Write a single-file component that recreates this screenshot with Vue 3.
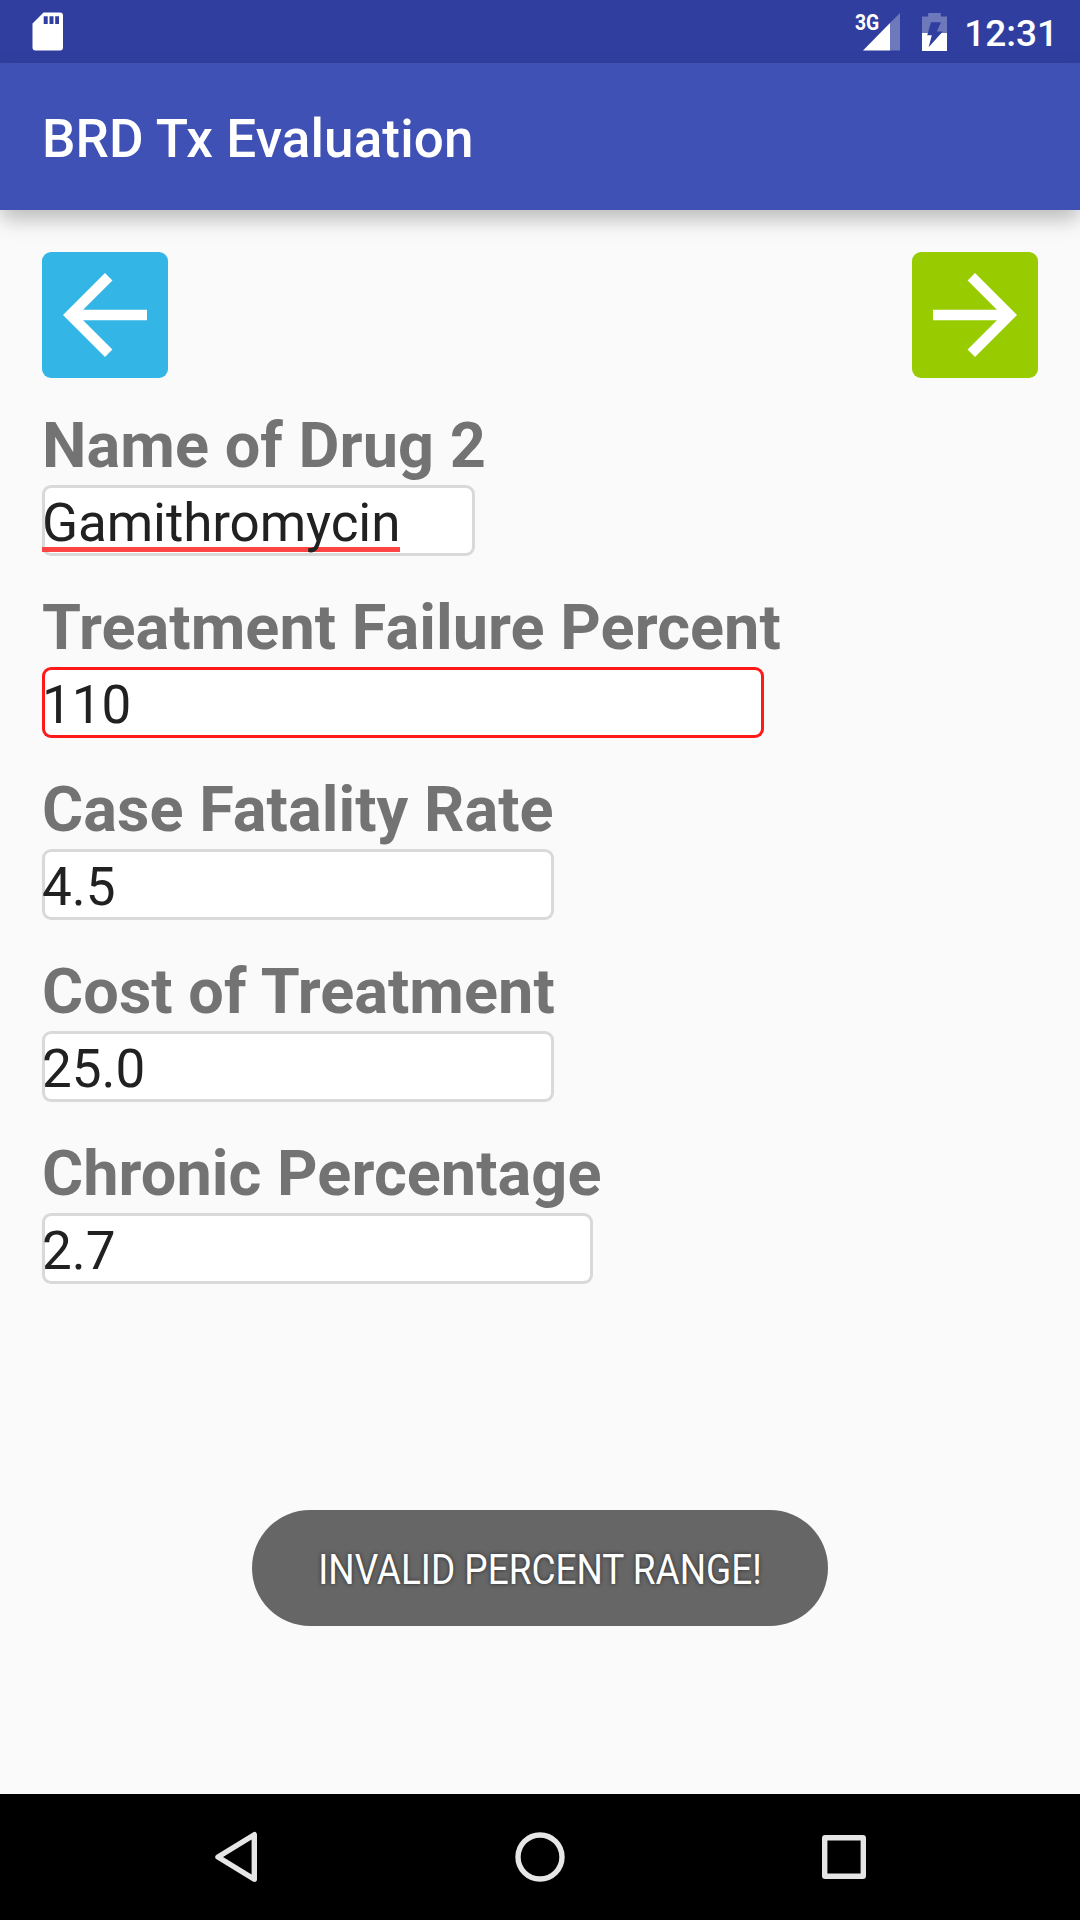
<script setup>
const fields = [
  { label: 'Name of Drug 2', value: 'Gamithromycin', width: 433, misspelled: true },
  { label: 'Treatment Failure Percent', value: '110', width: 722, invalid: true },
  { label: 'Case Fatality Rate', value: '4.5', width: 512 },
  { label: 'Cost of Treatment', value: '25.0', width: 512 },
  { label: 'Chronic Percentage', value: '2.7', width: 551 },
]
const battery = 'M6.200 0H18.800V3.500H25V38H0V3.500H6.200Z M9 9.300 5.200 22.300H9.800L6.600 34.300 20.700 18.600H14.800L19 9.300Z'
</script>

<template>
  <div class="screen">
    <header class="status">
      <svg class="sd" width="32" height="39" viewBox="0 0 32 39">
        <path fill="#fff" fill-rule="evenodd" d="M11.500 .500H28a3 3 0 0 1 3 3V35.500a3 3 0 0 1-3 3H3.500a3 3 0 0 1-3-3V11.500ZM11.700 4.200v7.800h4V4.200ZM17.500 4.200v7.800h4V4.200ZM23.200 4.200v7.800h3.800V4.200Z" />
      </svg>
      <div class="indicators">
        <div class="network">
          <span class="gen">3G</span>
          <svg width="37" height="38" viewBox="0 0 37 38">
            <path fill="#fff" fill-opacity=".3" d="M37 0V37.500H27V10Z" />
            <path fill="#fff" d="M0 37.500 27 10V37.500Z" />
          </svg>
        </div>
        <svg class="battery" width="25" height="38" viewBox="0 0 25 38">
          <clipPath id="empty"><rect width="25" height="20" /></clipPath>
          <clipPath id="charged"><rect y="20" width="25" height="18" /></clipPath>
          <path :d="battery" fill="#fff" fill-opacity=".3" fill-rule="evenodd" clip-path="url(#empty)" />
          <path :d="battery" fill="#fff" fill-rule="evenodd" clip-path="url(#charged)" />
        </svg>
        <span class="clock">12:31</span>
      </div>
    </header>
    <div class="appbar"><h1>BRD Tx Evaluation</h1></div>
    <main>
      <div class="actions">
        <button class="back" aria-label="Back">
          <svg viewBox="0 0 24 24"><path fill="#fff" d="M20 11H7.830l5.590-5.590L12 4l-8 8 8 8 1.410-1.410L7.830 13H20z" /></svg>
        </button>
        <button class="next" aria-label="Next">
          <svg viewBox="0 0 24 24"><path fill="#fff" d="M12 4l-1.410 1.410L16.170 11H4v2h12.170l-5.580 5.590L12 20l8-8z" /></svg>
        </button>
      </div>
      <div v-for="f in fields" :key="f.label" class="field">
        <label>{{ f.label }}</label>
        <div class="input" :class="{ invalid: f.invalid }" :style="{ width: f.width + 'px' }">
          <span :class="{ misspelled: f.misspelled }">{{ f.value }}</span>
        </div>
      </div>
      <div class="toast"><span>INVALID PERCENT RANGE!</span></div>
    </main>
    <nav>
      <svg width="50" height="54" viewBox="0 0 50 54"><path d="M42.300 4.700V49.300L6 27Z" /></svg>
      <svg width="54" height="54" viewBox="0 0 54 54"><circle cx="27" cy="27" r="22" /></svg>
      <svg width="54" height="54" viewBox="0 0 54 54"><rect x="7.700" y="7.700" width="38.600" height="38.600" rx=".5" /></svg>
    </nav>
  </div>
</template>

<style>
body { margin: 0; background: #fafafa; }
</style>

<style scoped>
.screen {
  width: 1080px;
  height: 1920px;
  display: flex;
  flex-direction: column;
  overflow: hidden;
  background: #fafafa;
  font-family: Roboto, sans-serif;
}
.status {
  height: 63px;
  flex: none;
  box-sizing: border-box;
  padding: 0 22px 0 32px;
  display: flex;
  justify-content: space-between;
  align-items: center;
  background: #303f9f;
  color: #fff;
}
.indicators { display: flex; align-items: center; }
.network { position: relative; display: flex; margin-right: 22px; }
.gen {
  position: absolute;
  left: -8px;
  top: -2px;
  font-size: 21.5px;
  line-height: 24px;
  font-weight: 700;
  transform: scaleX(.9);
  transform-origin: left;
}
.battery { margin-right: 17px; }
.clock { font-size: 37px; line-height: 43px; font-weight: 500; padding-top: 3px; }
.appbar {
  height: 147px;
  flex: none;
  display: flex;
  align-items: center;
  padding-left: 42px;
  background: #3f51b5;
  box-shadow: 0 10px 20px -1px rgba(0, 0, 0, .26);
}
h1 {
  margin: 0;
  color: #fff;
  font-size: 53px;
  line-height: 62px;
  letter-spacing: .12px;
  font-weight: 500;
  padding-top: 5px;
}
main { flex: 1; padding: 42px 42px 0; display: flex; flex-direction: column; align-items: flex-start; }
.actions { align-self: stretch; display: flex; justify-content: space-between; margin-bottom: 31px; }
button { width: 126px; height: 126px; padding: 0; border: 0; border-radius: 9px; }
button svg { display: block; width: 126px; height: 126px; }
.back { background: #33b5e5; }
.next { background: #99cc00; }
.field { margin-bottom: 35px; }
label {
  display: block;
  height: 76px;
  color: #737373;
  font-size: 63px;
  line-height: 74px;
  letter-spacing: .05px;
  font-weight: 700;
  white-space: nowrap;
}
.input {
  height: 71px;
  border-radius: 9px;
  background: #fff;
  box-shadow: inset 0 0 0 3px #d9d9d9;
  color: #212121;
  font-size: 53px;
  line-height: 76px;
  white-space: nowrap;
}
.input.invalid { box-shadow: inset 0 0 0 3px #ff1a1a; }
.misspelled {
  letter-spacing: -.1px;
  background: linear-gradient(#ff4444, #ff4444) 0 55px / 100% 5px no-repeat;
}
.toast {
  align-self: center;
  width: 576px;
  height: 116px;
  margin-top: 191px;
  border-radius: 58px;
  display: flex;
  align-items: center;
  justify-content: center;
  background: #666;
}
.toast span {
  color: #fff;
  font-size: 42px;
  line-height: 50px;
  padding-top: 3px;
  white-space: nowrap;
  text-shadow: 0 0 5px rgba(0, 0, 0, .6);
  transform: scaleX(.88);
}
nav {
  height: 126px;
  flex: none;
  display: flex;
  align-items: center;
  justify-content: space-between;
  box-sizing: border-box;
  padding: 0 209px 0 212px;
  background: #000;
}
nav svg { fill: none; stroke: #e6e6e6; stroke-width: 5.4; stroke-linejoin: round; }
</style>
